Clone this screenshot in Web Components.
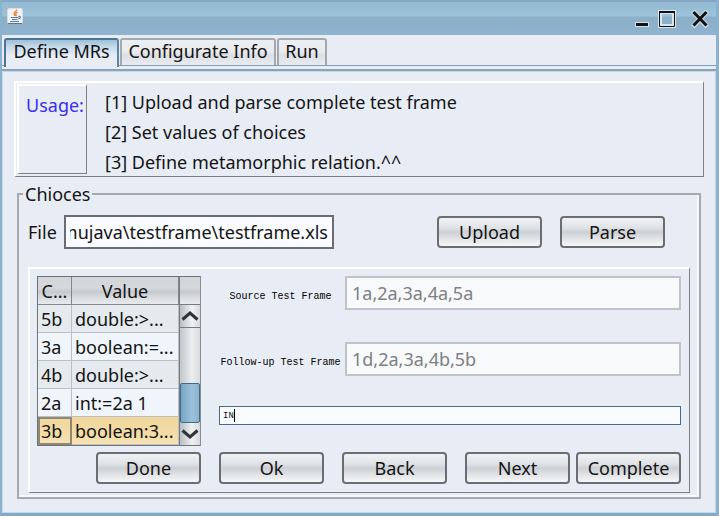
<!DOCTYPE html>
<html lang="en">
<head>
<meta charset="utf-8">
<title>Define MRs</title>
<style>
html,body{margin:0;background:#fff}
body{font:18px/24px "Noto Sans","Open Sans",sans-serif;color:#141414}
</style>
</head>
<body>
<app-window>
  <tab-bar slot="tabs"></tab-bar>
  <usage-panel></usage-panel>
  <choices-panel></choices-panel>
</app-window>

<template id="app-window">
  <style>
    :host{display:flex;flex-direction:column;box-sizing:border-box;min-height:calc(100vh - 3px);border:solid #8ab2cd;border-width:0 3px 3px 2px;border-bottom-color:#7fabc6;background:#e8edf5;box-shadow:inset 0 -1px #4f748e}
    header{display:flex;align-items:center;height:35px;padding:0 4px 0 5px;box-sizing:border-box;
      background:linear-gradient(#84a6c0 0 2px,transparent 2px),linear-gradient(#93bbd3,#9cc1d8 45%,#8cafc8 50%,#8fb4cf)}
    header>svg{display:block;margin-top:-4px}
    .ctl{display:flex;gap:1px;margin-left:auto}
    .ctl button{border:0;padding:0;background:none;width:24px;height:22px}
    .ctl button:last-child{margin-left:8px}
    .ctl svg{display:block}
    main{flex:1;display:flex;flex-direction:column;padding:10px 12px 13px 12px;border:1px solid #c9d5df;border-top:0}
  </style>
  <header>
    <svg width="16" height="16" viewBox="0 0 16 16"><rect x=".5" y=".5" width="15" height="15" rx="1.5" fill="#f2f3f4" stroke="#d5dde3"/><path d="M1 15.500h14" stroke="#5c7487"/><path d="M9.500 1.500c.6 2-3 2.600-2.400 4.300.2.800 1 1 .8 2.200M10.500 4.200c-1.800.8-2.300 1.600-1.500 2.500.6.600.2 1-.3 1.500" fill="none" stroke="#ea8433" stroke-width="1.300"/><path d="M4 9.500h7.500M5 11.500h5.500M3 13.500h9M11.500 8.500c2.500-.6 2.500 2-.3 2.500" fill="none" stroke="#54799a" stroke-width="1.200"/></svg>
    <div class="ctl">
      <button aria-label="Minimize"><svg width="24" height="22"><path d="M5 17.500h14" stroke="#d6e2ea" stroke-width="5"/><path d="M6 17.500h12" stroke="#111" stroke-width="3"/></svg></button>
      <button aria-label="Maximize"><svg width="24" height="22"><rect x="5" y="5" width="14" height="14" fill="none" stroke="#dbe6ed" stroke-width="4"/><path d="M4.500 5v14.500h15V5" fill="none" stroke="#111"/><path d="M4 5h16" stroke="#111" stroke-width="2"/></svg></button>
      <button aria-label="Close"><svg width="24" height="22"><path d="M6.500 6l11 12M17.500 6l-11 12" stroke="#cbdae4" stroke-width="5" stroke-linecap="square"/><path d="M5.500 5l13 13.500M18.500 5l-13 13.500" stroke="#111" stroke-width="3"/></svg></button>
    </div>
  </header>
  <slot name="tabs"></slot>
  <main><slot></slot></main>
</template>

<template id="tab-bar">
  <style>
    :host{display:block;padding-top:3px}
    nav{display:flex;gap:1px;padding-left:2px;height:27px}
    button{font:inherit;color:inherit;box-sizing:border-box;height:27px;padding:0 0 2px;border:2px solid #a3a9af;border-bottom:0;border-radius:3px 3px 0 0;background:linear-gradient(#eceff2,#e9ebee 45%,#dcdfe3 60%,#e8ebef);white-space:nowrap;line-height:23px}
    .a{width:115px}.b{width:156px}.c{width:50px}
    .a{height:29px;padding-bottom:4px;border-color:#4d7593;border-right-color:#5d86a4;background:linear-gradient(#9cc0d8,#c5daea 25%,#e8edf5 60%)}
    .rule{height:3px;border:solid #7f9fb6;border-width:1px 0 2px;border-bottom-color:#87a4ba;box-shadow:0 1px #c9d8e4}
  </style>
  <nav role="tablist"><button class="a" role="tab" aria-selected="true">Define MRs</button><button class="b" role="tab">Configurate Info</button><button class="c" role="tab">Run</button></nav>
  <div class="rule"></div>
</template>

<template id="usage-panel">
  <style>
    :host{display:flex;gap:18px;padding:1px 2px 2px 1px;margin:0 -1px;border:solid #7d8187;border-width:2px 1px 1px 2px;border-top-color:#fff;border-left-color:#fff}
    h2{margin:0;font:inherit;color:#3a2cf5;box-sizing:border-box;width:70px;height:90px;padding:7px 0 0 7px;border:solid #7d8187;border-width:2px 1px 1px 2px;border-top-color:#fff;border-left-color:#fff;white-space:nowrap}
    div{display:flex;flex-direction:column;gap:6px;padding-top:6px}
    p{margin:0}
  </style>
  <h2>Usage:</h2>
  <div><p>[1] Upload and parse complete test frame</p><p>[2] Set values of choices</p><p>[3] Define metamorphic relation.^^</p></div>
</template>

<template id="push-button">
  <style>
    :host{display:block;flex:0 0 105px;height:32px}
    button{display:block;width:100%;height:100%;box-sizing:border-box;padding:0;font:inherit;line-height:26px;color:inherit;border:2px solid #6a6e74;border-radius:4px;background:linear-gradient(#f0f2f4,#e0e3e6 35%,#ccd0d4 50%,#dee0e3 70%,#f6f7f9)}
  </style>
  <button><slot></slot></button>
</template>

<template id="choices-panel">
  <style>
    :host{display:block;margin:5px 2px 0}
    fieldset{margin:0;min-width:0;border:2px solid #a6aaaf;padding:9px 2px 4px 9px;box-shadow:inset -2px -2px #f6f8fb}
    legend{padding:0 2px;margin-left:-5px}
    .file{display:flex;align-items:center;gap:18px;padding-right:32px}
    .file text-field{margin-right:auto}
    .work{margin-top:18px;display:grid;grid-template-columns:164px minmax(0,1fr);gap:6px 18px;padding:7px 8px 8px 7px;border:solid #7d8187;border-width:2px 1px 1px 2px;border-top-color:#fff;border-left-color:#fff;margin-right:7px}
    .fields{display:flex;flex-direction:column}
    .fields text-field+text-field{margin-top:32px}
    .fields cmd-field{margin-top:30px}
    .left{display:flex;justify-content:flex-end}
    .right{display:flex;gap:6px}
    .right push-button{flex:1 1 105px}
    .sp{margin-right:12px}
  </style>
  <fieldset>
    <legend>Chioces</legend>
    <div class="file">
      <text-field label="File" value="mujava\testframe\testframe.xls" kind="file"></text-field>
      <push-button>Upload</push-button><push-button>Parse</push-button>
    </div>
    <div class="work">
      <choice-table></choice-table>
      <div class="fields">
        <text-field label="Source Test Frame" value="1a,2a,3a,4a,5a" kind="frame"></text-field>
        <text-field label="Follow-up Test Frame" value="1d,2a,3a,4b,5b" kind="frame"></text-field>
        <cmd-field></cmd-field>
      </div>
      <div class="left"><push-button>Done</push-button></div>
      <div class="right"><push-button class="sp">Ok</push-button><push-button class="sp">Back</push-button><push-button>Next</push-button><push-button>Complete</push-button></div>
    </div>
  </fieldset>
</template>

<template id="text-field">
  <style>
    :host{display:flex;align-items:center;gap:7px}
    label{white-space:nowrap}
    input{box-sizing:border-box;height:34px;min-width:0;margin:0;padding:0 4px;font:inherit;color:inherit;border:2px solid #6a6e74;background:#f9fbff;width:270px;border-radius:0}
    :host([kind=frame]){gap:0}
    :host([kind=frame]) label{font:10px/14px "Liberation Mono",monospace;color:#000;flex:0 0 126px;box-sizing:border-box;text-align:center;padding:8px 3px 0 0}
    :host([kind=frame]) input{flex:1;width:0;padding:0 5px;border-color:#c0c4c9;background:#f8f9fb;color:#7c7f83;-webkit-text-fill-color:#7c7f83}
  </style>
  <label for="i"></label><input id="i" type="text">
</template>

<template id="cmd-field">
  <style>
    :host{display:block;position:relative}
    input{display:block;box-sizing:border-box;width:100%;height:19px;margin:0;padding:0 3px;border:1px solid #476c8b;background:#f9fbff;color:#111;font:9px/14px "Liberation Mono",monospace;border-radius:0}
    i{position:absolute;left:15px;top:3px;width:1px;height:13px;background:#000}
  </style>
  <input type="text" value="IN" aria-label="Relation"><i></i>
</template>

<template id="choice-table">
  <style>
    :host{display:flex;box-sizing:border-box;height:170px;border:1px solid #6e7277;border-right-color:#8b8f94}
    table{flex:1;min-width:0;border-collapse:separate;border-spacing:0;table-layout:fixed;height:168px}
    th,td{box-sizing:border-box;height:28px;padding:0 0 0 3px;font-weight:400;white-space:nowrap;overflow:hidden;text-align:left;border:solid #bcc0c4;border-width:0 1px 1px 0;line-height:24px}
    th{text-align:center;padding:0;background:linear-gradient(#d3d6d9,#d6d9dc 40%,#c6cacf 55%,#dcdfe2 80%,#e8eaec);border-color:#83878c}
    tr>:first-child{width:34px}
    td{background:#e4eaee}
    .e td{background:#eff5fa}
    .s td{background:linear-gradient(#efd79c,#f3dca6 60%,#f6e2b4)}
    .s td:first-child{outline:2px solid #8d8878;outline-offset:-2px}
    .bar{width:21px;display:flex;flex-direction:column;box-sizing:border-box;border-left:1px solid #777b80}
    .cap{height:27px;border-bottom:1px solid #777b80;background:linear-gradient(#d3d6d9,#d6d9dc 40%,#c6cacf 55%,#dcdfe2 80%,#e8eaec)}
    button{height:22px;padding:0;border:0;background:linear-gradient(90deg,#b9bdc2,#f0f1f3 60%,#d6d9dc);display:flex;align-items:center;justify-content:center}
    .track{flex:1;display:flex;flex-direction:column;justify-content:flex-end;border-top:1px solid #777b80;background:linear-gradient(90deg,#c2c6ca,#eceef0 60%,#d9dcdf)}
    .thumb{height:38px;border:1px solid #3f6a8b;border-radius:2px;background:linear-gradient(90deg,#78a5c4,#9cc2da 60%,#8ab3ce)}
  </style>
  <table>
    <thead><tr><th>C...</th><th>Value</th></tr></thead>
    <tbody>
      <tr><td>5b</td><td>double:&gt;...</td></tr>
      <tr class="e"><td>3a</td><td>boolean:=...</td></tr>
      <tr><td>4b</td><td>double:&gt;...</td></tr>
      <tr class="e"><td>2a</td><td>int:=2a 1</td></tr>
      <tr class="s"><td>3b</td><td>boolean:3...</td></tr>
    </tbody>
  </table>
  <div class="bar">
    <div class="cap"></div>
    <button aria-label="Scroll up"><svg width="18" height="12"><path d="M1.500 9.500L9 3l7.500 6.500" fill="none" stroke="#303338" stroke-width="3"/></svg></button>
    <div class="track"><div class="thumb"></div></div>
    <button aria-label="Scroll down"><svg width="18" height="12"><path d="M1.500 2.500L9 9l7.500-6.500" fill="none" stroke="#303338" stroke-width="3"/></svg></button>
  </div>
</template>

<script>
class Base extends HTMLElement{
  constructor(){
    super();
    this.attachShadow({mode:'open'}).append(document.getElementById(this.localName).content.cloneNode(true));
  }
}
class TextField extends Base{
  connectedCallback(){
    const r=this.shadowRoot,input=r.querySelector('input');
    r.querySelector('label').textContent=this.getAttribute('label');
    input.value=this.getAttribute('value');
    if(this.getAttribute('kind')==='frame')input.disabled=true;
    else requestAnimationFrame(()=>{input.scrollLeft=input.scrollWidth});
  }
}
customElements.define('text-field',TextField);
for(const n of ['push-button','cmd-field','choice-table','choices-panel','usage-panel','tab-bar','app-window'])
  customElements.define(n,class extends Base{});
</script>
</body>
</html>
